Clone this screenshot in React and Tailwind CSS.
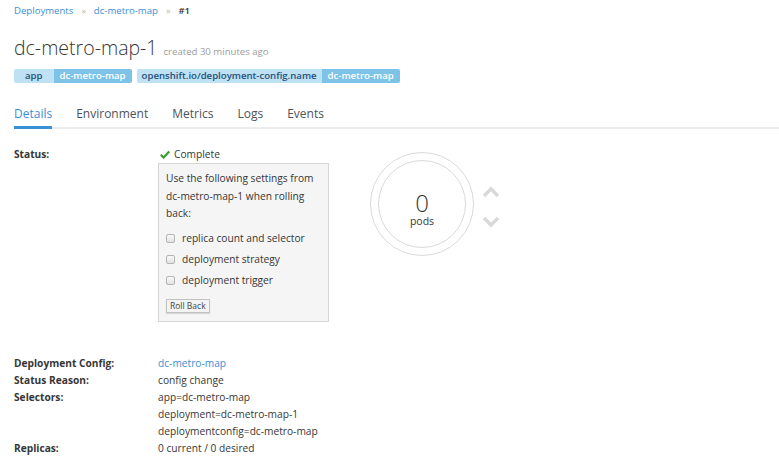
import { useState } from "react";

const font = { fontFamily: '"Open Sans", "Liberation Sans", sans-serif' };

export default function App() {
  const [opts, setOpts] = useState({ replica: false, strategy: false, trigger: false });

  const tabs = ["Details", "Environment", "Metrics", "Logs", "Events"];

  const toggle = (key) => setOpts({ ...opts, [key]: !opts[key] });

  return (
    <div className="min-h-[469px] bg-white pl-[14px] text-[#363636]" style={font}>
      {/* breadcrumb */}
      <div className="flex h-[22px] items-center text-[9.6px]">
        <a className="text-[#3b8fd6]">Deployments</a>
        <span className="px-[8px] text-[9px] text-[#b8b8b8]">»</span>
        <a className="text-[#3b8fd6]">dc-metro-map</a>
        <span className="px-[8px] text-[9px] text-[#b8b8b8]">»</span>
        <span className="font-semibold text-[#363636]">#1</span>
      </div>

      {/* title */}
      <div className="mt-[11px] flex items-baseline">
        <h1 className="text-[19.5px] font-light leading-[30px] text-[#363636]">dc-metro-map-1</h1>
        <span className="ml-[6px] text-[9.6px] text-[#9c9c9c]">created 30 minutes ago</span>
      </div>

      {/* labels */}
      <div className="mt-[6px] flex gap-[5px] text-[9.6px] font-semibold leading-[14px]">
        <div className="flex overflow-hidden rounded-[2px]">
          <span className="bg-[#bee1f4] px-[11px] text-[#23507c]">app</span>
          <span className="bg-[#7dc3e8] px-[6px] text-white">dc-metro-map</span>
        </div>
        <div className="flex overflow-hidden rounded-[2px]">
          <span className="bg-[#bee1f4] px-[5px] text-[#23507c]">openshift.io/deployment-config.name</span>
          <span className="bg-[#7dc3e8] px-[6px] text-white">dc-metro-map</span>
        </div>
      </div>

      {/* tabs */}
      <div className="mt-[22px] flex border-b-[2px] border-[#ededed] text-[12px] leading-[17px]">
        {tabs.map((t, i) => (
          <div
            key={t}
            className={
              i === 0
                ? "-mb-[2px] mr-[24px] border-b-[3px] border-[#3b8fd6] pb-[4px] text-[#3b8fd6]"
                : "mr-[24px] pb-[4px] text-[#4d5258]"
            }
          >
            {t}
          </div>
        ))}
      </div>

      {/* status + donut */}
      <div className="mt-[17px] flex text-[10.2px]">
        <div className="w-[144px] font-bold leading-[17px]">Status:</div>
        <div className="w-[171px]">
          <div className="flex items-center leading-[17px]">
            <svg width="10" height="9" viewBox="0 0 10 9" className="ml-[2px] mr-[4px]">
              <path d="M0.8 4.8 L3.6 7.6 L9.2 1.4" fill="none" stroke="#3f9c35" strokeWidth="2.2" />
            </svg>
            <span>Complete</span>
          </div>
          <div className="h-[159px] border border-[#d6d6d6] bg-[#f5f5f5] px-[7px] pt-[6px]">
            <p className="leading-[17.5px]">Use the following settings from dc-metro-map-1 when rolling back:</p>
            <div className="mt-[7px] flex flex-col gap-[3px]">
              {[
                ["replica", "replica count and selector"],
                ["strategy", "deployment strategy"],
                ["trigger", "deployment trigger"],
              ].map(([k, label]) => (
                <label key={k} className="flex h-[18px] items-center">
                  <input
                    type="checkbox"
                    checked={opts[k]}
                    onChange={() => toggle(k)}
                    className="m-0 h-[9px] w-[9px] appearance-none rounded-[2px] border border-[#b5b5b5] bg-gradient-to-b from-[#fafafa] to-[#e2e2e2]"
                  />
                  <span className="ml-[7px]">{label}</span>
                </label>
              ))}
            </div>
            <button className="mt-[9px] border border-[#c2c2c2] bg-[#f3f3f3] px-[3px] text-[8.5px] leading-[12px] text-[#444] shadow-[0_1px_1px_rgba(0,0,0,0.12)]">
              Roll Back
            </button>
          </div>
        </div>

        <div className="ml-[41px] mt-[6px] flex items-start">
          <div className="flex h-[104px] w-[104px] items-center justify-center rounded-full border border-[#dadada]">
            <div className="flex h-[88px] w-[88px] flex-col items-center justify-center rounded-full border border-[#dadada] pt-[10px]">
              <span className="text-[24px] font-light leading-[24px] text-[#363636]">0</span>
              <span className="text-[10.5px] leading-[12px] text-[#363636]">pods</span>
            </div>
          </div>
          <div className="ml-[8px] mt-[34px] flex flex-col gap-[18px]">
            <svg width="18" height="12" viewBox="0 0 18 12">
              <path d="M2 10 L9 3 L16 10" fill="none" stroke="#d9d9d9" strokeWidth="3.4" />
            </svg>
            <svg width="18" height="12" viewBox="0 0 18 12">
              <path d="M2 2 L9 9 L16 2" fill="none" stroke="#d9d9d9" strokeWidth="3.4" />
            </svg>
          </div>
        </div>
      </div>

      {/* details */}
      <dl className="mt-[33px] grid grid-cols-[144px_1fr] text-[10.2px] leading-[17px]">
        <dt className="font-bold">Deployment Config:</dt>
        <dd><a className="text-[#3b8fd6]">dc-metro-map</a></dd>
        <dt className="font-bold">Status Reason:</dt>
        <dd>config change</dd>
        <dt className="font-bold">Selectors:</dt>
        <dd>
          <div>app=dc-metro-map</div>
          <div>deployment=dc-metro-map-1</div>
          <div>deploymentconfig=dc-metro-map</div>
        </dd>
        <dt className="font-bold">Replicas:</dt>
        <dd>0 current / 0 desired</dd>
      </dl>
    </div>
  );
}
